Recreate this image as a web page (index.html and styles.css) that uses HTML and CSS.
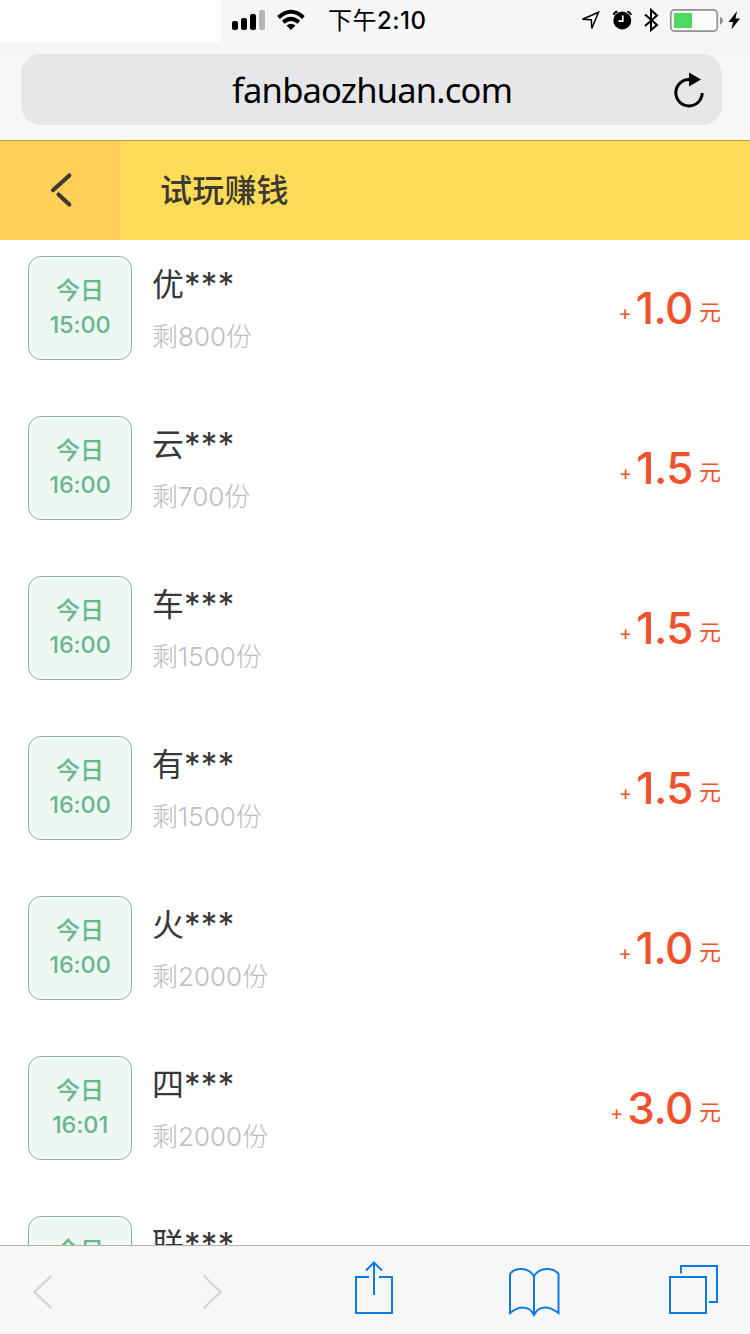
FILE: index.html
```
<!DOCTYPE html>
<html lang="zh-CN">
<head>
<meta charset="utf-8">
<title>试玩赚钱</title>
<link rel="stylesheet" href="styles.css">
</head>
<body>
<div class="screen">
  <header class="browser">
    <div class="status">
      <div class="blank"></div>
      <svg class="signal" width="34" height="42" viewBox="231 0 34 42"><rect x="232" y="21" width="6" height="9" rx="2"/><rect x="241" y="18" width="6" height="12" rx="2"/><rect x="250" y="14" width="6" height="16" rx="2"/><rect x="259" y="10" width="6" height="20" rx="2" fill="#b5b5b5"/></svg>
      <svg class="wifi" width="32" height="42" viewBox="275 0 32 42"><path d="M278.500 17.500Q291 6 303.500 17.500M283.200 22.300Q291 15.500 298.800 22.300" fill="none" stroke="#000" stroke-width="3.900"/><path d="M286.500 25.500Q291 22 295.500 25.500L291 30Z"/></svg>
      <div class="clock"><span class="cn">下午</span><span>2:10</span></div>
      <svg class="indicators" width="170" height="42" viewBox="580 0 170 42">
        <path d="M598.500 12.200L591.800 28.500L591.300 19.700L582.500 19.300Z" fill="none" stroke="#000" stroke-width="1.500"/>
        <circle cx="622.300" cy="20.500" r="9"/><path d="M613.600 15Q614 12.300 617.500 11.500M627.200 11.500Q630.500 12.300 631 15" fill="none" stroke="#000" stroke-width="1.800"/><path d="M622.800 15.500V21.200H618.500" fill="none" stroke="#fff" stroke-width="1.700"/>
        <path d="M645 14.500L657 25L651 30V10L657 15.500L645 26" fill="none" stroke="#000" stroke-width="2"/>
        <rect x="670.800" y="9.900" width="46.500" height="21.300" rx="4" fill="#fafafa" stroke="#929292" stroke-width="1.700"/><rect x="674" y="13" width="18" height="15" fill="#4cd964"/><path d="M720 16.500Q723 18 723 20.500T720 25Z" fill="#929292"/>
        <path d="M737 11L728.500 22H733L731.500 29.500L740 18.500H735.500Z"/>
      </svg>
    </div>
    <div class="address">
      <span class="url">fanbaozhuan.com</span>
      <svg class="reload" width="34" height="40" viewBox="672 70 34 40"><path d="M689 79.500A13.200 13.200 0 1 0 702.200 93" fill="none" stroke="#000" stroke-width="3"/><path d="M689 72.500V86.500L701 79.500Z"/></svg>
    </div>
  </header>
  <div class="titlebar">
    <div class="back"><svg width="24" height="36" viewBox="50 172 24 36"><path d="M69.300 175.500L53 190.200M58.500 194.500L69.300 204.500" fill="none" stroke="#3c3a32" stroke-width="4.200" stroke-linecap="round"/></svg></div>
    <h1>试玩赚钱</h1>
  </div>
  <main class="list">
    <div class="row"><div class="time"><span class="day">今日</span><span>15:00</span></div><div class="info"><div class="name">优<span>***</span></div><div class="left">剩<span>800</span>份</div></div><div class="price"><i>+</i><b>1.0</b><em>元</em></div></div>
    <div class="row"><div class="time"><span class="day">今日</span><span>16:00</span></div><div class="info"><div class="name">云<span>***</span></div><div class="left">剩<span>700</span>份</div></div><div class="price"><i>+</i><b>1.5</b><em>元</em></div></div>
    <div class="row"><div class="time"><span class="day">今日</span><span>16:00</span></div><div class="info"><div class="name">车<span>***</span></div><div class="left">剩<span>1500</span>份</div></div><div class="price"><i>+</i><b>1.5</b><em>元</em></div></div>
    <div class="row"><div class="time"><span class="day">今日</span><span>16:00</span></div><div class="info"><div class="name">有<span>***</span></div><div class="left">剩<span>1500</span>份</div></div><div class="price"><i>+</i><b>1.5</b><em>元</em></div></div>
    <div class="row"><div class="time"><span class="day">今日</span><span>16:00</span></div><div class="info"><div class="name">火<span>***</span></div><div class="left">剩<span>2000</span>份</div></div><div class="price"><i>+</i><b>1.0</b><em>元</em></div></div>
    <div class="row"><div class="time"><span class="day">今日</span><span>16:01</span></div><div class="info"><div class="name">四<span>***</span></div><div class="left">剩<span>2000</span>份</div></div><div class="price"><i>+</i><b>3.0</b><em>元</em></div></div>
    <div class="row"><div class="time"><span class="day">今日</span></div><div class="info"><div class="name">联<span>***</span></div></div></div>
  </main>
  <nav class="toolbar">
    <svg class="prev" width="22" height="38" viewBox="32 1273 22 38"><path class="arrow" d="M51.500 1275.500L34.500 1292L51.500 1308.500"/></svg>
    <svg class="next" width="22" height="38" viewBox="201 1273 22 38"><path class="arrow" d="M203.500 1275.500L220.500 1292L203.500 1308.500"/></svg>
    <svg class="share" width="40" height="56" viewBox="354 1260 40 56"><path class="line" d="M369 1277H356V1313H392V1277H379M374 1295V1262.500M366 1270.500L374 1262.500L382 1270.500"/></svg>
    <svg class="book" width="52" height="50" viewBox="508 1267 52 50"><path class="line" d="M534 1276C528 1267 515 1267 510 1274V1313C519 1306 529 1305 534 1315C539 1305 549 1306 558.500 1313V1274C553 1267 540 1267 534 1276V1315"/></svg>
    <svg class="tabs" width="52" height="50" viewBox="668 1265 52 50"><path class="line" d="M670 1277H706V1313H670ZM681 1273.500V1266H717V1302H709"/></svg>
  </nav>
</div>
</body>
</html>
```
FILE: styles.css
```
* { box-sizing: border-box; }
body { margin: 0; background: #fff; font-family: Inter, "Noto Sans CJK SC", sans-serif; }
svg { display: block; flex: none; }
.screen { width: 750px; height: 1334px; display: flex; flex-direction: column; overflow: hidden; }
.browser { height: 141px; flex: none; background: #f7f7f8; border-bottom: 1px solid #b7a13c; }
.status { height: 54px; display: flex; background: #f6f6f6; }
.blank { width: 221px; height: 42px; background: #fff; }
.signal { margin-left: 10px; }
.wifi { margin-left: 10px; }
.clock { display: flex; margin-left: 21px; height: 41px; line-height: 41px; font-size: 24px; font-weight: 500; letter-spacing: .5px; white-space: nowrap; }
.clock .cn { font: 24px/38px "Noto Sans CJK SC", sans-serif; letter-spacing: .5px; }
.indicators { margin-left: auto; }
.address { margin: 0 28px 0 21px; height: 71px; border-radius: 20px; background: #e7e7ea; display: flex; align-items: center; justify-content: flex-end; padding-right: 16px; }
.url { font: 34.5px/71px "Noto Sans", sans-serif; letter-spacing: -.8px; width: 281px; margin-right: 159px; white-space: nowrap; }
.titlebar { height: 99px; flex: none; display: flex; background: #ffdc57; }
.back { width: 120px; display: flex; align-items: center; padding: 0 0 2px 50px; background: #ffd058; }
h1 { margin: 0 0 0 40px; font: 500 32px/94px "Noto Sans CJK SC", sans-serif; letter-spacing: .2px; color: #3c3a32; }
.list { flex: 1; min-height: 0; overflow: hidden; }
.row { height: 160px; padding: 16px 29px 0 28px; display: flex; align-items: flex-start; }
.time { width: 104px; height: 104px; flex: none; border: 1px solid #7dbb9e; border-radius: 13px; background: #edf8f3; box-shadow: inset 0 0 0 3px #f7fcfa; color: #67b78e; display: flex; flex-direction: column; align-items: center; padding-top: 15px; font-size: 23.5px; line-height: 37px; font-weight: 500; letter-spacing: -.1px; }
.day { font: 500 24px/34px "Noto Sans CJK SC", sans-serif; letter-spacing: 0; }
.info { margin-left: 20px; flex: 1; font-family: "Noto Sans CJK SC", sans-serif; }
.name { display: flex; height: 57px; font-size: 32px; line-height: 52px; color: #38383a; }
.name span { font-size: 33px; line-height: 57px; letter-spacing: .3px; }
.name span, .left span { font-family: Inter, sans-serif; }
.left { font-size: 26px; line-height: 44px; color: #bdbdbd; font-weight: 300; }
.price { display: flex; color: #f0512d; line-height: 104px; }
.price i { font-style: normal; font-size: 20px; line-height: 115px; margin-right: 4px; }
.price b { font-size: 44px; font-weight: 500; letter-spacing: -.5px; }
.price em { font: 22px/109px "Noto Sans CJK SC", sans-serif; margin-left: 6px; }
.toolbar { height: 89px; flex: none; border-top: 1px solid #b2b2b2; background: #f7f7f7; display: flex; align-items: flex-start; }
.prev { margin: 27px 0 0 32px; }
.next { margin: 27px 0 0 147px; }
.share { margin: 14px 0 0 131px; }
.book { margin: 21px 0 0 114px; }
.tabs { margin: 19px 0 0 108px; }
.arrow { fill: none; stroke: #d5d5d5; stroke-width: 2.3; }
.line { fill: none; stroke: #0b7be8; stroke-width: 2; }
```
